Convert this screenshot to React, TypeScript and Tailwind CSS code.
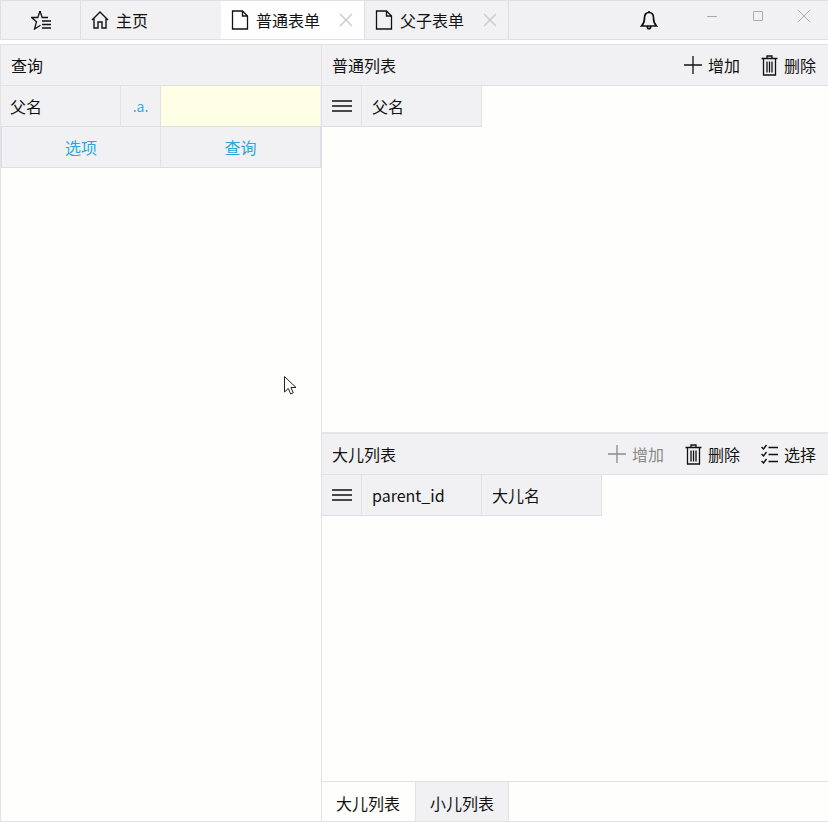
import { ReactNode } from 'react';

const font = '[font-family:"Noto_Sans_CJK_SC","Liberation_Sans",sans-serif]';

function FileIcon() {
  return (
    <svg width="18" height="20" viewBox="0 0 18 20" fill="none" stroke="#111" strokeWidth="1.3">
      <path d="M1.5 1h10l5 5v13h-15z" />
      <path d="M11.5 1v5h5" />
    </svg>
  );
}

function CloseIcon() {
  return (
    <svg width="14" height="14" viewBox="0 0 14 14" stroke="#c8c8c8" strokeWidth="1.3">
      <path d="M1 1l12 12M13 1L1 13" />
    </svg>
  );
}

function PlusIcon({ color = '#111' }: { color?: string }) {
  return (
    <svg width="18" height="18" viewBox="0 0 18 18" stroke={color} strokeWidth="1.3">
      <path d="M9 0v18M0 9h18" />
    </svg>
  );
}

function TrashIcon() {
  return (
    <svg width="17" height="21" viewBox="0 0 17 21" fill="none" stroke="#111" strokeWidth="1.3">
      <path d="M0.500 3.500h16M6 3.500V1h5v2.500M2.500 3.500v16.500h12V3.500M6 6.500v11M8.500 6.500v11M11 6.500v11" />
    </svg>
  );
}

function MenuIcon() {
  return (
    <svg width="20" height="12" viewBox="0 0 20 12" stroke="#111" strokeWidth="1.4">
      <path d="M0 1h20M0 6h20M0 11h20" />
    </svg>
  );
}

function CheckListIcon() {
  return (
    <svg width="17" height="20" viewBox="0 0 17 20" fill="none" stroke="#111" strokeWidth="1.4">
      <path d="M0.500 3l2 2 3-4M0.500 10l2 2 3-4M0.500 17l2 2 3-4M7.500 3.500h9.500M7.500 10.500h9.500M7.500 17.500h9.500" />
    </svg>
  );
}

function ToolButton({ icon, label, muted }: { icon: ReactNode; label: string; muted?: boolean }) {
  return (
    <div className={`flex items-center gap-[6px] text-[16px] ${muted ? 'text-[#8a8a8a]' : 'text-[#111]'}`}>
      {icon}
      <span>{label}</span>
    </div>
  );
}

function Tab({ title, active }: { title: string; active?: boolean }) {
  return (
    <div
      className={`w-[144px] h-full flex items-center pl-[10px] border-r border-[#dedee2] ${active ? 'bg-white' : ''}`}
    >
      <FileIcon />
      <span className="ml-[7px] text-[16px] text-[#111]">{title}</span>
      <span className="ml-[19px] flex">
        <CloseIcon />
      </span>
    </div>
  );
}

function HeadCell({ width, children }: { width: string; children: ReactNode }) {
  return (
    <div className={`${width} h-full flex items-center pl-[10px] border-r border-[#e2e2e6] text-[16px] text-[#111]`}>
      {children}
    </div>
  );
}

function TableHead({ columns }: { columns: ReactNode }) {
  return (
    <div className="h-[41px] flex">
      <div className="flex h-full bg-[#f1f1f4] border-b border-[#dedee2]">
        <div className="w-[40px] h-full flex items-center justify-center border-r border-[#e2e2e6]">
          <MenuIcon />
        </div>
        {columns}
      </div>
    </div>
  );
}

export default function App() {
  return (
    <div className={`${font} relative w-[828px] h-[822px] flex flex-col bg-[#fefefc] overflow-hidden`}>
      {/* title bar */}
      <div className="h-[40px] flex bg-[#f1f1f4] border-t border-[#e0e0e4] border-b shrink-0">
        <div className="w-[81px] h-full flex items-center justify-center border-r border-[#dedee2] border-l">
          <svg width="20" height="20" viewBox="0 0 20 20" fill="none" stroke="#111" strokeWidth="1.3">
            <path d="M9 1l2.200 6.500H17M9 1L6.800 7.500H0.500l5 4.200L3.500 19l6-3.800" />
            <path d="M11 11h9M11 14.500h9M11 18h9" />
          </svg>
        </div>
        <div className="w-[140px] h-full flex items-center pl-[10px] gap-[7px]">
          <svg width="18" height="18" viewBox="0 0 18 18" fill="none" stroke="#111" strokeWidth="1.4">
            <path d="M1 9l8-8 8 8M3 7.500V17h4v-6h4v6h4V7.500" />
          </svg>
          <span className="text-[16px] text-[#111]">主页</span>
        </div>
        <Tab title="普通表单" active />
        <Tab title="父子表单" />
        <div className="flex-1 flex items-center">
          <span className="ml-[131px] flex">
            <svg width="18" height="21" viewBox="0 0 18 21" fill="none" stroke="#111" strokeWidth="1.7">
              <path d="M9 2.500c-3.200 0-4.500 2.600-4.500 5.500 0 4-1 6-3 8h15c-2-2-3-4-3-8 0-2.900-1.300-5.500-4.500-5.500zM9 1v1.500M7.300 16.500c0 3 3.400 3 3.400 0" />
            </svg>
          </span>
          <div className="ml-[49px] flex items-center self-start mt-[8px] h-[14px]">
            <div className="w-[10px] h-px bg-[#aaaaaa]" />
            <div className="ml-[36px] w-[10px] h-[10px] border border-[#aaaaaa] rounded-[1px]" />
            <svg className="ml-[35px]" width="12" height="12" viewBox="0 0 12 12" stroke="#aaaaaa" strokeWidth="1">
              <path d="M0 0l12 12M12 0L0 12" />
            </svg>
          </div>
        </div>
      </div>

      <div className="h-[4px] shrink-0 bg-white" />

      <div className="flex-1 flex min-h-0 border-b border-[#e2e2e6]">
        {/* query panel */}
        <div className="w-[322px] flex flex-col border-l border-r border-[#e2e2e6] border-t">
          <div className="h-[41px] flex items-center pl-[10px] bg-[#f1f1f4] border-b border-[#e2e2e6] text-[16px] text-[#111]">
            查询
          </div>
          <div className="h-[41px] flex bg-[#f1f1f4] border-b border-[#dedee2]">
            <div className="w-[120px] flex items-center pl-[9px] border-r border-[#e2e2e6] text-[16px] text-[#111]">
              父名
            </div>
            <div className="w-[40px] flex items-center justify-center border-r border-[#e2e2e6] text-[14px] text-[#3aa9dc]">
              .a.
            </div>
            <div className="flex-1 mr-px bg-[#ffffe6]" />
          </div>
          <div className="h-[41px] flex bg-[#f1f1f4] border-b border-x border-[#dedee2] text-[16px] text-[#2ea6da]">
            <div className="w-[159px] flex items-center justify-center border-r border-[#e2e2e6]">选项</div>
            <div className="flex-1 flex items-center justify-center">查询</div>
          </div>
        </div>

        {/* list panels */}
        <div className="flex-1 flex flex-col min-w-0">
          <div className="h-[390px] flex flex-col border-t border-[#e2e2e6] border-b-2 border-b-[#e4e4e8] shrink-0">
            <div className="h-[41px] flex items-center justify-between pl-[10px] pr-[12px] bg-[#f1f1f4] border-b border-[#e2e2e6]">
              <span className="text-[16px] text-[#111]">普通列表</span>
              <div className="flex items-center gap-[21px]">
                <ToolButton icon={<PlusIcon />} label="增加" />
                <ToolButton icon={<TrashIcon />} label="删除" />
              </div>
            </div>
            <TableHead columns={<HeadCell width="w-[120px]">父名</HeadCell>} />
          </div>

          <div className="flex-1 flex flex-col min-h-0">
            <div className="h-[41px] flex items-center justify-between pl-[10px] pr-[12px] bg-[#f1f1f4] border-b border-[#e2e2e6] shrink-0">
              <span className="text-[16px] text-[#111]">大儿列表</span>
              <div className="flex items-center gap-[21px]">
                <ToolButton icon={<PlusIcon color="#8a8a8a" />} label="增加" muted />
                <ToolButton icon={<TrashIcon />} label="删除" />
                <ToolButton icon={<CheckListIcon />} label="选择" />
              </div>
            </div>
            <TableHead
              columns={
                <>
                  <HeadCell width="w-[120px]">parent_id</HeadCell>
                  <HeadCell width="w-[120px]">大儿名</HeadCell>
                </>
              }
            />
            <div className="flex-1" />
            <div className="h-[40px] flex border-t border-[#e2e2e6] shrink-0 text-[16px] text-[#111]">
              <div className="w-[93px] flex items-center justify-center pt-[2px] pr-[1px]">大儿列表</div>
              <div className="w-[94px] flex items-center justify-center pt-[2px] bg-[#f1f1f4] border-x border-[#e2e2e6]">
                小儿列表
              </div>
            </div>
          </div>
        </div>
      </div>

      {/* mouse pointer */}
      <svg className="absolute left-[284px] top-[376px]" width="14" height="20" viewBox="0 0 14 20">
        <path
          d="M0.500 0.500v15.500l3.800-3.500 2.400 5.500 2.600-1.200-2.400-5.300h5.100z"
          fill="#fff"
          stroke="#222"
          strokeWidth="1"
        />
      </svg>
    </div>
  );
}
